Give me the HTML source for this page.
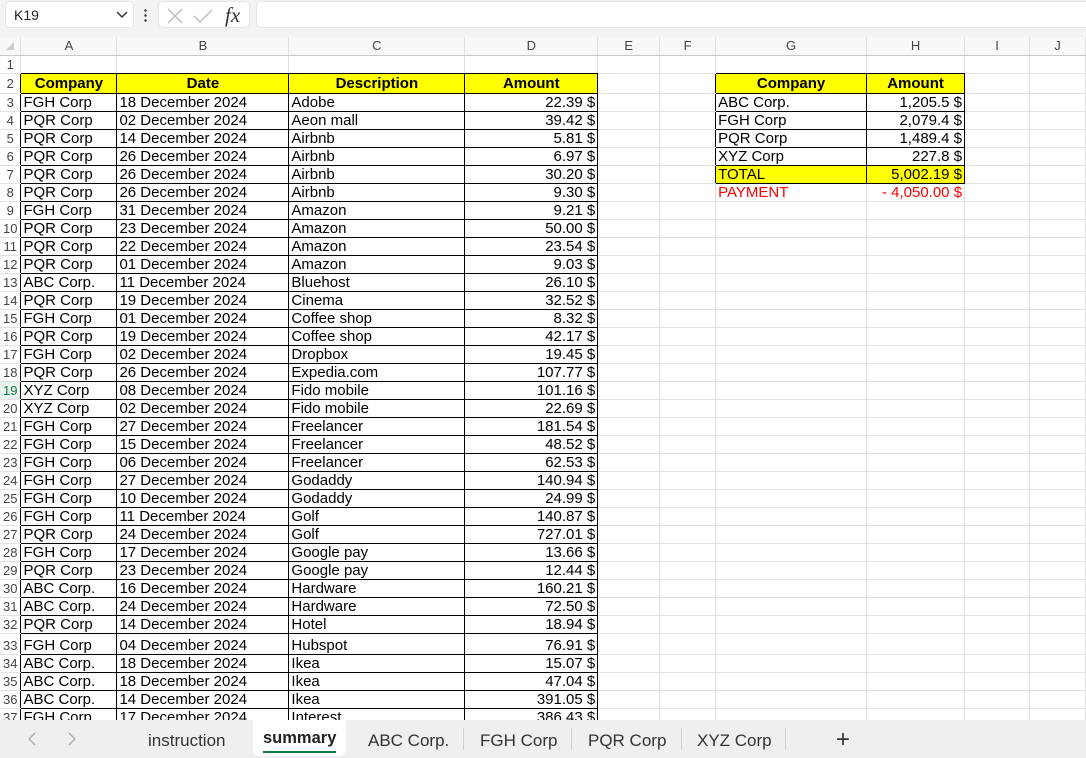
<!DOCTYPE html>
<html><head><meta charset="utf-8">
<style>
body{margin:0;width:1086px;height:758px;overflow:hidden;background:#fff;font-family:"Liberation Sans",Arial,sans-serif;position:relative}
#top{position:absolute;left:0;top:0;width:1086px;height:37px;background:#f3f3f3}
.box{position:absolute;top:1px;height:27px;background:#fff;border-radius:5px;border:1px solid #e6e6e6;box-sizing:border-box}
table{position:absolute;left:0;top:37px;border-collapse:collapse;table-layout:fixed;font-size:15px;color:#000}
td{border-right:1px solid #e1e1e1;border-bottom:1px solid #e1e1e1;padding:0 2px;white-space:nowrap;overflow:hidden;line-height:16px}
td.h{background:#fff;color:#444;font-size:13px;text-align:center;padding:0}
tr.ch td{color:#444;font-size:13px;text-align:center;border-bottom:1px solid #c8c8c8}
td.b{border-right:1px solid #000;border-bottom:1px solid #000}
td.y{background:#ff0;font-weight:bold;text-align:center}
td.r{text-align:right}
td.bb{border-bottom:1px solid #000}
td.br{border-right:1px solid #000}
td.red{color:#f00}
#tabs{position:absolute;left:0;top:720px;width:1086px;height:38px;background:#f0efee;font-size:17px;color:#333}
#tabs span{position:absolute;top:11px}
.sep{position:absolute;top:8px;width:1px;height:22px;background:#d0d0d0}
</style></head><body>
<div id="top">
<div class="box" style="left:5px;width:129px"><span style="position:absolute;left:8px;top:5px;font-size:14px;color:#222">K19</span>
<svg style="position:absolute;left:110px;top:9px" width="12" height="8"><path d="M1 1l5 5 5-5" stroke="#333" fill="none" stroke-width="1.5"/></svg></div>
<div style="position:absolute;left:144px;top:8px;width:3px;height:14px;background:radial-gradient(circle,#444 1.2px,transparent 1.4px) 0 0/3px 5px"></div>
<div class="box" style="left:158px;width:92px">
<svg style="position:absolute;left:8px;top:6px" width="16" height="16"><path d="M1 1l14 14M15 1L1 15" stroke="#bbb" stroke-width="1.3"/></svg>
<svg style="position:absolute;left:34px;top:6px" width="20" height="16"><path d="M1 8l6 6L19 2" stroke="#bbb" fill="none" stroke-width="1.3"/></svg>
<span style="position:absolute;left:66px;top:1px;font-family:'Liberation Serif',serif;font-style:italic;font-size:21px;color:#333">fx</span></div>
<div class="box" style="left:256px;width:840px"></div>
</div>
<table>
<colgroup><col style="width:21px"><col style="width:96px"><col style="width:172px"><col style="width:176px"><col style="width:133px"><col style="width:62px"><col style="width:56px"><col style="width:151px"><col style="width:98px"><col style="width:65px"><col style="width:56px"></colgroup>
<tr class="ch" style="height:17px;background:#f8f8f8"><td style="border-right:1px solid #e1e1e1"><svg width="10" height="10" style="margin-top:4px"><path d="M9 1V9H1z" fill="#ccc"/></svg></td><td>A</td><td>B</td><td>C</td><td>D</td><td>E</td><td>F</td><td>G</td><td>H</td><td>I</td><td>J</td></tr>
<tr style="height:18px"><td class="h">1</td><td class="bb"></td><td class="bb"></td><td class="bb"></td><td class="bb"></td><td></td><td></td><td class="bb"></td><td class="bb"></td><td></td><td></td></tr>
<tr style="height:20px"><td class="h br">2</td><td class="b y">Company</td><td class="b y">Date</td><td class="b y">Description</td><td class="b y">Amount</td><td></td><td class="br"></td><td class="b y">Company</td><td class="b y">Amount</td><td></td><td></td></tr>
<tr style="height:18px"><td class="h br">3</td><td class="b">FGH Corp</td><td class="b">18 December 2024</td><td class="b">Adobe</td><td class="b r">22.39 $</td><td></td><td class="br"></td><td class="b">ABC Corp.</td><td class="b r">1,205.5 $</td><td></td><td></td></tr>
<tr style="height:18px"><td class="h br">4</td><td class="b">PQR Corp</td><td class="b">02 December 2024</td><td class="b">Aeon mall</td><td class="b r">39.42 $</td><td></td><td class="br"></td><td class="b">FGH Corp</td><td class="b r">2,079.4 $</td><td></td><td></td></tr>
<tr style="height:18px"><td class="h br">5</td><td class="b">PQR Corp</td><td class="b">14 December 2024</td><td class="b">Airbnb</td><td class="b r">5.81 $</td><td></td><td class="br"></td><td class="b">PQR Corp</td><td class="b r">1,489.4 $</td><td></td><td></td></tr>
<tr style="height:18px"><td class="h br">6</td><td class="b">PQR Corp</td><td class="b">26 December 2024</td><td class="b">Airbnb</td><td class="b r">6.97 $</td><td></td><td class="br"></td><td class="b">XYZ Corp</td><td class="b r">227.8 $</td><td></td><td></td></tr>
<tr style="height:18px"><td class="h br">7</td><td class="b">PQR Corp</td><td class="b">26 December 2024</td><td class="b">Airbnb</td><td class="b r">30.20 $</td><td></td><td class="br"></td><td class="b" style="background:#ff0">TOTAL</td><td class="b r" style="background:#ff0">5,002.19 $</td><td></td><td></td></tr>
<tr style="height:18px"><td class="h br">8</td><td class="b">PQR Corp</td><td class="b">26 December 2024</td><td class="b">Airbnb</td><td class="b r">9.30 $</td><td></td><td></td><td class="red">PAYMENT</td><td class="r red">- 4,050.00 $</td><td></td><td></td></tr>
<tr style="height:18px"><td class="h br">9</td><td class="b">FGH Corp</td><td class="b">31 December 2024</td><td class="b">Amazon</td><td class="b r">9.21 $</td><td></td><td></td><td></td><td></td><td></td><td></td></tr>
<tr style="height:18px"><td class="h br">10</td><td class="b">PQR Corp</td><td class="b">23 December 2024</td><td class="b">Amazon</td><td class="b r">50.00 $</td><td></td><td></td><td></td><td></td><td></td><td></td></tr>
<tr style="height:18px"><td class="h br">11</td><td class="b">PQR Corp</td><td class="b">22 December 2024</td><td class="b">Amazon</td><td class="b r">23.54 $</td><td></td><td></td><td></td><td></td><td></td><td></td></tr>
<tr style="height:18px"><td class="h br">12</td><td class="b">PQR Corp</td><td class="b">01 December 2024</td><td class="b">Amazon</td><td class="b r">9.03 $</td><td></td><td></td><td></td><td></td><td></td><td></td></tr>
<tr style="height:18px"><td class="h br">13</td><td class="b">ABC Corp.</td><td class="b">11 December 2024</td><td class="b">Bluehost</td><td class="b r">26.10 $</td><td></td><td></td><td></td><td></td><td></td><td></td></tr>
<tr style="height:18px"><td class="h br">14</td><td class="b">PQR Corp</td><td class="b">19 December 2024</td><td class="b">Cinema</td><td class="b r">32.52 $</td><td></td><td></td><td></td><td></td><td></td><td></td></tr>
<tr style="height:18px"><td class="h br">15</td><td class="b">FGH Corp</td><td class="b">01 December 2024</td><td class="b">Coffee shop</td><td class="b r">8.32 $</td><td></td><td></td><td></td><td></td><td></td><td></td></tr>
<tr style="height:18px"><td class="h br">16</td><td class="b">PQR Corp</td><td class="b">19 December 2024</td><td class="b">Coffee shop</td><td class="b r">42.17 $</td><td></td><td></td><td></td><td></td><td></td><td></td></tr>
<tr style="height:18px"><td class="h br">17</td><td class="b">FGH Corp</td><td class="b">02 December 2024</td><td class="b">Dropbox</td><td class="b r">19.45 $</td><td></td><td></td><td></td><td></td><td></td><td></td></tr>
<tr style="height:18px"><td class="h br">18</td><td class="b">PQR Corp</td><td class="b">26 December 2024</td><td class="b">Expedia.com</td><td class="b r">107.77 $</td><td></td><td></td><td></td><td></td><td></td><td></td></tr>
<tr style="height:18px"><td class="h br" style="color:#107c41;background:#e8f2ec">19</td><td class="b">XYZ Corp</td><td class="b">08 December 2024</td><td class="b">Fido mobile</td><td class="b r">101.16 $</td><td></td><td></td><td></td><td></td><td></td><td></td></tr>
<tr style="height:18px"><td class="h br">20</td><td class="b">XYZ Corp</td><td class="b">02 December 2024</td><td class="b">Fido mobile</td><td class="b r">22.69 $</td><td></td><td></td><td></td><td></td><td></td><td></td></tr>
<tr style="height:18px"><td class="h br">21</td><td class="b">FGH Corp</td><td class="b">27 December 2024</td><td class="b">Freelancer</td><td class="b r">181.54 $</td><td></td><td></td><td></td><td></td><td></td><td></td></tr>
<tr style="height:18px"><td class="h br">22</td><td class="b">FGH Corp</td><td class="b">15 December 2024</td><td class="b">Freelancer</td><td class="b r">48.52 $</td><td></td><td></td><td></td><td></td><td></td><td></td></tr>
<tr style="height:18px"><td class="h br">23</td><td class="b">FGH Corp</td><td class="b">06 December 2024</td><td class="b">Freelancer</td><td class="b r">62.53 $</td><td></td><td></td><td></td><td></td><td></td><td></td></tr>
<tr style="height:18px"><td class="h br">24</td><td class="b">FGH Corp</td><td class="b">27 December 2024</td><td class="b">Godaddy</td><td class="b r">140.94 $</td><td></td><td></td><td></td><td></td><td></td><td></td></tr>
<tr style="height:18px"><td class="h br">25</td><td class="b">FGH Corp</td><td class="b">10 December 2024</td><td class="b">Godaddy</td><td class="b r">24.99 $</td><td></td><td></td><td></td><td></td><td></td><td></td></tr>
<tr style="height:18px"><td class="h br">26</td><td class="b">FGH Corp</td><td class="b">11 December 2024</td><td class="b">Golf</td><td class="b r">140.87 $</td><td></td><td></td><td></td><td></td><td></td><td></td></tr>
<tr style="height:18px"><td class="h br">27</td><td class="b">PQR Corp</td><td class="b">24 December 2024</td><td class="b">Golf</td><td class="b r">727.01 $</td><td></td><td></td><td></td><td></td><td></td><td></td></tr>
<tr style="height:18px"><td class="h br">28</td><td class="b">FGH Corp</td><td class="b">17 December 2024</td><td class="b">Google pay</td><td class="b r">13.66 $</td><td></td><td></td><td></td><td></td><td></td><td></td></tr>
<tr style="height:18px"><td class="h br">29</td><td class="b">PQR Corp</td><td class="b">23 December 2024</td><td class="b">Google pay</td><td class="b r">12.44 $</td><td></td><td></td><td></td><td></td><td></td><td></td></tr>
<tr style="height:18px"><td class="h br">30</td><td class="b">ABC Corp.</td><td class="b">16 December 2024</td><td class="b">Hardware</td><td class="b r">160.21 $</td><td></td><td></td><td></td><td></td><td></td><td></td></tr>
<tr style="height:18px"><td class="h br">31</td><td class="b">ABC Corp.</td><td class="b">24 December 2024</td><td class="b">Hardware</td><td class="b r">72.50 $</td><td></td><td></td><td></td><td></td><td></td><td></td></tr>
<tr style="height:18px"><td class="h br">32</td><td class="b">PQR Corp</td><td class="b">14 December 2024</td><td class="b">Hotel</td><td class="b r">18.94 $</td><td></td><td></td><td></td><td></td><td></td><td></td></tr>
<tr style="height:21px"><td class="h br" style="vertical-align:bottom">33</td><td class="b" style="vertical-align:bottom">FGH Corp</td><td class="b" style="vertical-align:bottom">04 December 2024</td><td class="b" style="vertical-align:bottom">Hubspot</td><td class="b r" style="vertical-align:bottom">76.91 $</td><td></td><td></td><td></td><td></td><td></td><td></td></tr>
<tr style="height:18px"><td class="h br">34</td><td class="b">ABC Corp.</td><td class="b">18 December 2024</td><td class="b">Ikea</td><td class="b r">15.07 $</td><td></td><td></td><td></td><td></td><td></td><td></td></tr>
<tr style="height:18px"><td class="h br">35</td><td class="b">ABC Corp.</td><td class="b">18 December 2024</td><td class="b">Ikea</td><td class="b r">47.04 $</td><td></td><td></td><td></td><td></td><td></td><td></td></tr>
<tr style="height:18px"><td class="h br">36</td><td class="b">ABC Corp.</td><td class="b">14 December 2024</td><td class="b">Ikea</td><td class="b r">391.05 $</td><td></td><td></td><td></td><td></td><td></td><td></td></tr>
<tr style="height:18px"><td class="h br">37</td><td class="b">FGH Corp</td><td class="b">17 December 2024</td><td class="b">Interest</td><td class="b r">386.43 $</td><td></td><td></td><td></td><td></td><td></td><td></td></tr>
</table>
<div id="tabs">
<svg style="position:absolute;left:27px;top:12px" width="10" height="14"><path d="M8 1L2 7l6 6" stroke="#aaa" fill="none" stroke-width="1.3"/></svg>
<svg style="position:absolute;left:67px;top:12px" width="10" height="14"><path d="M2 1l6 6-6 6" stroke="#aaa" fill="none" stroke-width="1.3"/></svg>
<span style="left:148px">instruction</span>
<div style="position:absolute;left:253px;top:0;width:93px;height:36px;background:#fff;border-radius:0 0 6px 6px"></div>
<span style="left:263px;top:9px;font-weight:bold;color:#222;font-size:16.5px">summary</span>
<div style="position:absolute;left:263px;top:31px;width:73px;height:2px;background:#107c41"></div>
<span style="left:368px">ABC Corp.</span>
<div class="sep" style="left:463px"></div>
<span style="left:480px">FGH Corp</span>
<div class="sep" style="left:571px"></div>
<span style="left:588px">PQR Corp</span>
<div class="sep" style="left:681px"></div>
<span style="left:697px">XYZ Corp</span>
<div class="sep" style="left:785px"></div>
<span style="left:836px;top:6px;font-size:24px;font-weight:300">+</span>
</div>
</body></html>
